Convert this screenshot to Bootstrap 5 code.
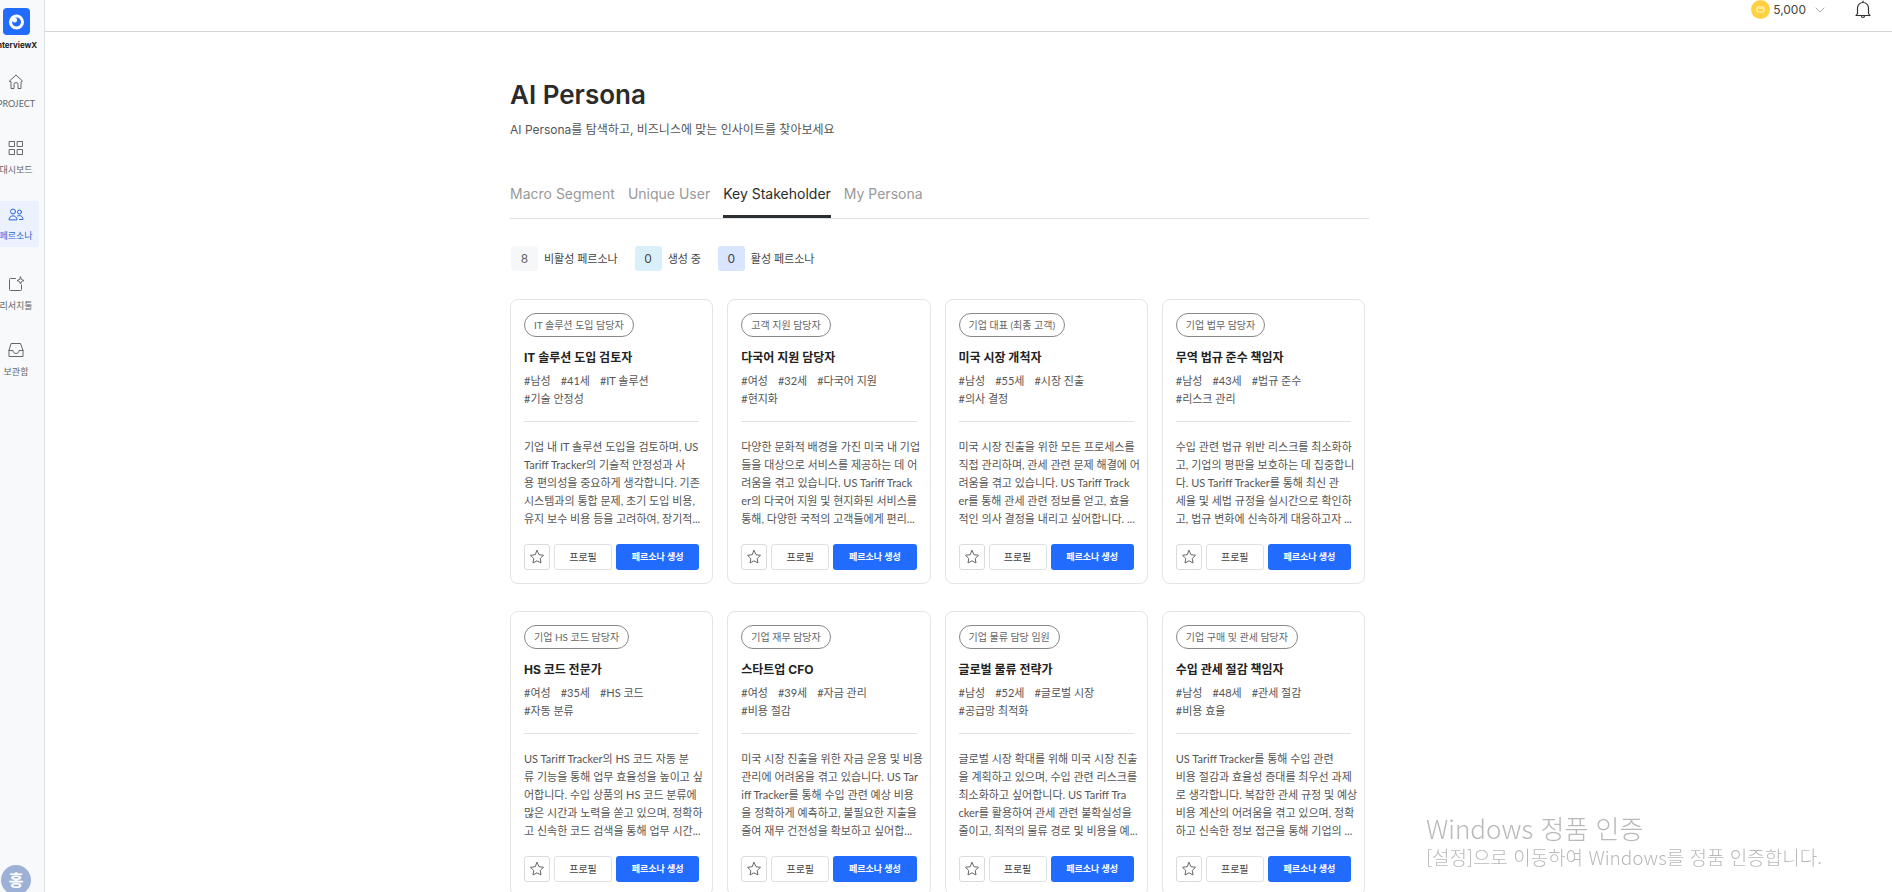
<!DOCTYPE html>
<html lang="ko">
<head>
<meta charset="utf-8">
<meta name="viewport" content="width=device-width, initial-scale=1">
<title>AI Persona</title>
<link rel="stylesheet" href="https://cdn.jsdelivr.net/npm/bootstrap@5.3.0/dist/css/bootstrap.min.css">
<style>
  body { font-family: Lato, "Noto Sans CJK KR", sans-serif; font-size: 11px; line-height: 18px; color: #555; background: #fff; }
  h1, h2, .intro, .seg-tabs, .brand-name, .points, .stat-num { font-family: Inter, "Noto Sans CJK KR", sans-serif; }
  svg { display: block; fill: none; stroke: currentColor; stroke-linecap: round; stroke-linejoin: round; }
  svg.flat { stroke: none; }

  .side { width: 45px; background: #f7f9fb; border-right: 1px solid #dbe0e4; padding-top: 8px; }
  .side-slot { width: 32px; white-space: nowrap; }
  .brand-name { font-size: 8px; line-height: 12px; font-weight: 700; color: #222; margin-top: 4px; }
  .side-menu { gap: 20px; margin-top: 18px; }
  .side-link { width: 39px; height: 46px; padding: 4px 7px 0 0; color: #666; font-size: 9px; line-height: 14px; text-decoration: none; }
  .side-link svg { margin-bottom: 6px; }
  .side-link.active { background: #ebf1fd; color: #2b66d9; }
  .avatar { width: 30px; height: 30px; flex: none; background: #9db1d6; color: #fff; font-size: 16px; font-weight: 700; margin: 0 0 -3px 1px; border: 0; padding: 0; }

  .top-bar { height: 32px; border-bottom: 1px solid #d3d6d9; padding: 0 20px 12px 0; gap: 27px; }
  .points { font-size: 12px; color: #444; gap: 3px; }
  .points .chev { margin-left: 4px; color: #aaa; }
  .bell { color: #333; stroke-width: 1.2; }

  .scroll-area { min-height: 0; overflow-y: auto; scrollbar-width: none; padding: 47px 58px 28px 0; }
  .scroll-area::-webkit-scrollbar { display: none; }
  .page-col { width: 100%; max-width: 859px; }
  h1 { font-size: 26px; line-height: 32px; font-weight: 600; color: #2b2b2b; margin: 0 0 9px; }
  .intro { font-size: 12px; line-height: 20px; color: #555; margin: 0 0 44px; }
  .seg-tabs { gap: 13px; border-bottom: 1px solid #dee0e2; }
  .seg-tabs a { font-size: 14px; line-height: 20px; color: #999; text-decoration: none; padding: 0 0 11px; border-bottom: 3px solid transparent; }
  .seg-tabs a.active { color: #2b2b2b; border-color: #2b2f31; }
  .stats { gap: 17px; margin: 27px 0 28px 1px; color: #444; }
  .stat-num { width: 27px; height: 25px; border-radius: 3px; font-size: 12px; margin-right: 6px; }
  .n-idle { background: #f6f7f9; color: #666; }
  .n-busy { background: #d9f0fa; }
  .n-live { background: #d9e4fd; }

  .persona-grid { display: grid; grid-template-columns: repeat(4, minmax(0, 1fr)); gap: 27px 14px; padding-right: 4px; }
  .persona { border: 1px solid #e3e4e6; border-radius: 8px; padding: 13px; min-width: 0; }
  .role { height: 24px; border: 1px solid #888; border-radius: 12px; padding: 0 9px; font-size: 10px; color: #666; }
  h2 { font-size: 12px; line-height: 20px; font-weight: 700; color: #222; margin: 11px 0 4px; }
  .tags { gap: 10px; white-space: nowrap; }
  .persona hr { margin: 13px 0 16px; opacity: 1; border-top-color: #dfe1e3; }
  .about { white-space: nowrap; margin: 0 0 16px; }
  .acts { gap: 4px; }
  .acts button { height: 26px; border-radius: 3px; padding: 0; font-size: 10px; line-height: 16px; }
  .b-star { width: 26px; border: 1px solid #d9dbde; background: #fff; color: #666; }
  .b-view { width: 58px; border: 1px solid #dfe1e4; background: #fff; color: #444; }
  .acts .b-make { border: 0; background: #216bff; color: #fff; font-weight: 700; font-size: 9px; }

  .os-note { position: fixed; right: 60px; bottom: 22px; width: 406px; color: #b9b9b9; font-family: "Noto Sans CJK KR", sans-serif; font-weight: 300; white-space: nowrap; pointer-events: none; }
  .os-note .t1 { font-size: 26px; line-height: 32px; }
  .os-note .t2 { font-size: 19px; line-height: 26px; }
</style>
</head>
<body>
<div class="d-flex vh-100 overflow-hidden">
  <aside class="side d-flex flex-column flex-shrink-0 overflow-hidden">
    <div class="side-slot d-flex flex-column align-items-center">
      <svg class="flat" width="27" height="27" viewBox="0 0 27 27"><rect width="27" height="27" rx="4" fill="#216bff"/><circle cx="13.500" cy="14" r="6" stroke="#fff" stroke-width="3"/><circle cx="11.500" cy="12" r="2.500" fill="#fff"/></svg>
      <div class="brand-name">InterviewX</div>
    </div>
    <nav class="side-menu d-flex flex-column">
      <a href="#" class="side-link d-flex flex-column align-items-center text-nowrap">
        <svg width="18" height="18" viewBox="0 0 18 18"><path d="M2.500 8 9 2l6.500 6-1.500 1v6.500h-3v-4a2 2 0 0 0-4 0v4H4V9z"/></svg>PROJECT</a>
      <a href="#" class="side-link d-flex flex-column align-items-center text-nowrap">
        <svg width="18" height="18" viewBox="0 0 18 18"><path d="M2.500 2.500h5v5h-5zM10.500 2.500h5v5h-5zM2.500 10.500h5v5h-5zM10.500 10.500h5v5h-5z"/></svg>대시보드</a>
      <a href="#" class="side-link active d-flex flex-column align-items-center text-nowrap" aria-current="page">
        <svg width="18" height="18" viewBox="0 0 18 18"><circle cx="6" cy="6.500" r="2.500"/><circle cx="12.500" cy="7" r="2"/><path d="M2 14.500c0-5 8-5 8 0zM10.500 11c2-1 5.500-.5 5.500 3.500h-3.500"/></svg>페르소나</a>
      <a href="#" class="side-link d-flex flex-column align-items-center text-nowrap mt-1">
        <svg width="18" height="18" viewBox="0 0 18 18"><path d="M8.500 3.500H3.500a1 1 0 0 0-1 1v10a1 1 0 0 0 1 1h10a1 1 0 0 0 1-1V10M13.500 2l1 2.500L17 5.500l-2.500 1-1 2.500-1-2.500-2.500-1 2.500-1z"/></svg>리서치툴</a>
      <a href="#" class="side-link d-flex flex-column align-items-center text-nowrap">
        <svg width="18" height="18" viewBox="0 0 18 18"><path d="M4.500 2.500h9l2.500 7v6H2v-6zM2 9.500h4c0 4 6 4 6 0h4"/></svg>보관함</a>
    </nav>
    <button type="button" class="avatar rounded-circle mt-auto">홍</button>
  </aside>

  <div class="d-flex flex-column flex-grow-1 overflow-hidden">
    <header class="top-bar d-flex justify-content-end align-items-center flex-shrink-0">
      <div class="points d-flex align-items-center">
        <svg class="flat" width="19" height="19" viewBox="0 0 19 19"><circle cx="9.500" cy="9.500" r="9.500" fill="#ffd140"/><rect x="6" y="7" width="7" height="5" rx="2" stroke="#fff0a8" stroke-width="1.500"/><path d="M8 8.500h3" stroke="#fff0a8"/></svg>
        <span>5,000</span>
        <svg class="chev" width="14" height="10" viewBox="0 0 14 10"><path d="m3 3 4 4 4-4"/></svg>
      </div>
      <button type="button" class="btn p-0 border-0" aria-label="알림">
        <svg class="bell" width="18" height="20" viewBox="0 0 18 20"><path d="M2 15.500h14l-1.500-2V8a5.500 5.500 0 0 0-11 0v5.500zM7.500 16a1.500 1.500 0 0 0 3 0M9 1v1.500"/></svg>
      </button>
    </header>

    <main class="scroll-area flex-grow-1">
      <div class="page-col mx-auto">
        <h1>AI Persona</h1>
        <p class="intro">AI Persona를 탐색하고, 비즈니스에 맞는 인사이트를 찾아보세요</p>
        <nav class="seg-tabs d-flex">
          <a href="#">Macro Segment</a><a href="#">Unique User</a><a href="#" class="active">Key Stakeholder</a><a href="#">My Persona</a>
        </nav>
        <div class="stats d-flex">
          <div class="d-flex align-items-center"><span class="stat-num n-idle d-flex align-items-center justify-content-center">8</span>비활성 페르소나</div>
          <div class="d-flex align-items-center"><span class="stat-num n-busy d-flex align-items-center justify-content-center">0</span>생성 중</div>
          <div class="d-flex align-items-center"><span class="stat-num n-live d-flex align-items-center justify-content-center">0</span>활성 페르소나</div>
        </div>
        <section class="persona-grid" id="personas"></section>
      </div>
    </main>
  </div>
</div>

<div class="os-note"><div class="t1">Windows 정품 인증</div><div class="t2">[설정]으로 이동하여 Windows를 정품 인증합니다.</div></div>

<script src="https://cdn.jsdelivr.net/npm/bootstrap@5.3.0/dist/js/bootstrap.bundle.min.js"></script>
<script>
  // role, name, first tag row, second tag row, summary lines
  const personas = [
    ["IT 솔루션 도입 담당자", "IT 솔루션 도입 검토자", ["남성", "41세", "IT 솔루션"], "기술 안정성",
      ["기업 내 IT 솔루션 도입을 검토하며, US", "Tariff Tracker의 기술적 안정성과 사", "용 편의성을 중요하게 생각합니다. 기존", "시스템과의 통합 문제, 초기 도입 비용,", "유지 보수 비용 등을 고려하여, 장기적..."]],
    ["고객 지원 담당자", "다국어 지원 담당자", ["여성", "32세", "다국어 지원"], "현지화",
      ["다양한 문화적 배경을 가진 미국 내 기업", "들을 대상으로 서비스를 제공하는 데 어", "려움을 겪고 있습니다. US Tariff Track", "er의 다국어 지원 및 현지화된 서비스를", "통해, 다양한 국적의 고객들에게 편리..."]],
    ["기업 대표 (최종 고객)", "미국 시장 개척자", ["남성", "55세", "시장 진출"], "의사 결정",
      ["미국 시장 진출을 위한 모든 프로세스를", "직접 관리하며, 관세 관련 문제 해결에 어", "려움을 겪고 있습니다. US Tariff Track", "er를 통해 관세 관련 정보를 얻고, 효율", "적인 의사 결정을 내리고 싶어합니다. ..."]],
    ["기업 법무 담당자", "무역 법규 준수 책임자", ["남성", "43세", "법규 준수"], "리스크 관리",
      ["수입 관련 법규 위반 리스크를 최소화하", "고, 기업의 평판을 보호하는 데 집중합니", "다. US Tariff Tracker를 통해 최신 관", "세율 및 세법 규정을 실시간으로 확인하", "고, 법규 변화에 신속하게 대응하고자 ..."]],
    ["기업 HS 코드 담당자", "HS 코드 전문가", ["여성", "35세", "HS 코드"], "자동 분류",
      ["US Tariff Tracker의 HS 코드 자동 분", "류 기능을 통해 업무 효율성을 높이고 싶", "어합니다. 수입 상품의 HS 코드 분류에", "많은 시간과 노력을 쏟고 있으며, 정확하", "고 신속한 코드 검색을 통해 업무 시간..."]],
    ["기업 재무 담당자", "스타트업 CFO", ["여성", "39세", "자금 관리"], "비용 절감",
      ["미국 시장 진출을 위한 자금 운용 및 비용", "관리에 어려움을 겪고 있습니다. US Tar", "iff Tracker를 통해 수입 관련 예상 비용", "을 정확하게 예측하고, 불필요한 지출을", "줄여 재무 건전성을 확보하고 싶어합..."]],
    ["기업 물류 담당 임원", "글로벌 물류 전략가", ["남성", "52세", "글로벌 시장"], "공급망 최적화",
      ["글로벌 시장 확대를 위해 미국 시장 진출", "을 계획하고 있으며, 수입 관련 리스크를", "최소화하고 싶어합니다. US Tariff Tra", "cker를 활용하여 관세 관련 불확실성을", "줄이고, 최적의 물류 경로 및 비용을 예..."]],
    ["기업 구매 및 관세 담당자", "수입 관세 절감 책임자", ["남성", "48세", "관세 절감"], "비용 효율",
      ["US Tariff Tracker를 통해 수입 관련", "비용 절감과 효율성 증대를 최우선 과제", "로 생각합니다. 복잡한 관세 규정 및 예상", "비용 계산의 어려움을 겪고 있으며, 정확", "하고 신속한 정보 접근을 통해 기업의 ..."]]
  ];
  const tag = t => `<span>#${t}</span>`;
  document.getElementById("personas").innerHTML = personas.map(([role, name, tags, more, about]) => `
    <article class="persona">
      <span class="role d-inline-flex align-items-center align-top">${role}</span>
      <h2>${name}</h2>
      <div class="tags d-flex">${tags.map(tag).join("")}</div>
      <div class="tags d-flex">${tag(more)}</div>
      <hr>
      <p class="about">${about.join("<br>")}</p>
      <div class="acts d-flex">
        <button type="button" class="b-star d-flex align-items-center justify-content-center" aria-label="즐겨찾기"><svg width="16" height="16" viewBox="0 0 16 16"><path d="m8 1.500 2 4.200 4.500.6-3.300 3.200.8 4.500-4-2.200L4 14l.8-4.500L1.500 6.300 6 5.700z"/></svg></button>
        <button type="button" class="b-view">프로필</button>
        <button type="button" class="b-make flex-grow-1">페르소나 생성</button>
      </div>
    </article>`).join("");
</script>
</body>
</html>
